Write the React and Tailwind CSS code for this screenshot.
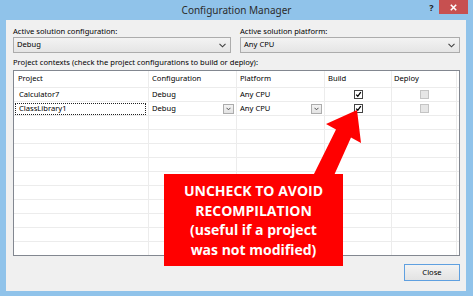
import React from "react";

const Chevron = () => (
  <svg width="7" height="5" viewBox="0 0 7 5" className="shrink-0">
    <polyline points="0.5,0.8 3.5,3.8 6.5,0.8" fill="none" stroke="#404040" strokeWidth="1.1" />
  </svg>
);

const Combo = ({ text }) => (
  <div className="h-[16px] border border-[#acacac] bg-linear-to-b from-[#f3f3f3] to-[#e5e5e5] flex items-center pl-[3px] pr-[4px] text-[7.6px] text-black">
    <span className="flex-1 leading-none">{text}</span>
    <Chevron />
  </div>
);

const DropBtn = () => (
  <div className="w-[11px] h-[10px] border border-[#acacac] bg-linear-to-b from-[#f3f3f3] to-[#e3e3e3] flex items-center justify-center">
    <svg width="5" height="4" viewBox="0 0 5 4">
      <polyline points="0.5,0.8 2.5,2.8 4.5,0.8" fill="none" stroke="#505050" strokeWidth="1" />
    </svg>
  </div>
);

const Check = ({ checked, disabled }) => (
  <div
    className={
      disabled
        ? "w-[9px] h-[9px] border border-[#c4c4c4] bg-[#e6e6e6]"
        : "w-[9px] h-[9px] border border-[#444444] bg-white flex items-center justify-center"
    }
  >
    {checked && (
      <svg width="7" height="7" viewBox="0 0 7 7">
        <polyline points="1.2,3.6 2.8,5.3 5.8,1.2" fill="none" stroke="#000" strokeWidth="1.3" />
      </svg>
    )}
  </div>
);

const cols = "grid grid-cols-[135px_88px_88px_67px_65px_1fr]";
const cell = "border-r border-[#ececec] flex items-center h-full";

export default function App() {
  const emptyRows = Array.from({ length: 10 });
  return (
    <div className="relative w-[473px] h-[296px] bg-[#90c3ea] flex flex-col overflow-hidden font-['Noto_Sans',sans-serif] text-black">
      {/* Title bar */}
      <div className="h-[20px] flex items-start shrink-0">
        <div className="w-[53px]" />
        <div className="flex-1 text-center text-[10px] leading-[20px] text-[#2b2b2b]">Configuration Manager</div>
        <div className="w-[53px] flex items-start">
          <div className="w-[19px] pl-[4px] text-center text-[9px] font-bold leading-[16px] text-[#222]">?</div>
          <div className="w-[29px] h-[14px] bg-[#c75050] flex items-center justify-center">
            <svg width="7" height="7" viewBox="0 0 7 7">
              <path d="M0.8,0.8 L6.2,6.2 M6.2,0.8 L0.8,6.2" stroke="#fff" strokeWidth="1.6" />
            </svg>
          </div>
        </div>
      </div>

      {/* Content */}
      <div className="ml-[6px] mr-[7px] h-[271px] bg-[#f0f0f0] pl-[7px] pr-[6px] pt-[6px] flex flex-col text-[7.6px]">
        <div className="flex gap-[9px]">
          <div className="w-[218px] flex flex-col">
            <div className="h-[11px] leading-[11px]">Active solution configuration:</div>
            <Combo text="Debug" />
          </div>
          <div className="flex-1 flex flex-col">
            <div className="h-[11px] leading-[11px]">Active solution platform:</div>
            <Combo text="Any CPU" />
          </div>
        </div>

        <div className="mt-[4px] h-[11px] leading-[11px]">
          Project contexts (check the project configurations to build or deploy):
        </div>

        <div className="mt-[2px] h-[186px] border border-[#828790] bg-white overflow-hidden flex flex-col">
          <div className={`${cols} h-[17px] border-b border-[#ececec] shrink-0`}>
            <div className={`${cell} pl-[4px]`}>Project</div>
            <div className={`${cell} pl-[3px]`}>Configuration</div>
            <div className={`${cell} pl-[3px]`}>Platform</div>
            <div className={`${cell} pl-[3px]`}>Build</div>
            <div className={`${cell} pl-[2px]`}>Deploy</div>
            <div className="h-full" />
          </div>

          <div className={`${cols} h-[14px] border-b border-[#ececec] shrink-0`}>
            <div className={`${cell} pl-[5px]`}>Calculator7</div>
            <div className={`${cell} pl-[3px]`}>Debug</div>
            <div className={`${cell} pl-[3px]`}>Any CPU</div>
            <div className={`${cell} justify-center`}><Check checked /></div>
            <div className={`${cell} justify-center`}><Check disabled /></div>
            <div className="h-full" />
          </div>

          <div className={`${cols} h-[14px] border-b border-[#ececec] shrink-0`}>
            <div className={`${cell} pl-[1px] pr-[2px]`}>
              <div className="flex-1 h-[12px] border border-dotted border-[#222] flex items-center pl-[3px]">ClassLibrary1</div>
            </div>
            <div className={`${cell} pl-[3px] pr-[2px]`}>
              <span className="flex-1">Debug</span>
              <DropBtn />
            </div>
            <div className={`${cell} pl-[3px] pr-[2px]`}>
              <span className="flex-1">Any CPU</span>
              <DropBtn />
            </div>
            <div className={`${cell} justify-center`}><Check checked /></div>
            <div className={`${cell} justify-center`}><Check disabled /></div>
            <div className="h-full" />
          </div>

          {emptyRows.map((_, i) => (
            <div key={i} className={`${cols} h-[14px] border-b border-[#ececec] shrink-0`}>
              <div className={cell} />
              <div className={cell} />
              <div className={cell} />
              <div className={cell} />
              <div className={cell} />
              <div className="h-full" />
            </div>
          ))}
        </div>

        <div className="mt-[8px] flex justify-end">
          <div className="w-[56px] h-[17px] border border-[#5fa0e0] bg-linear-to-b from-[#f3f3f3] to-[#e3e3e3] flex items-center justify-center">
            Close
          </div>
        </div>
      </div>

      {/* Red arrow overlay */}
      <svg className="absolute left-0 top-0" width="473" height="296" viewBox="0 0 473 296">
        <polygon
          points="357,110 326,124 336,129.5 310,182 327,191 351,137.5 361,143"
          fill="#ff0000"
        />
      </svg>

      {/* Callout */}
      <div className="absolute left-[164px] top-[174px] w-[179px] h-[92px] bg-[#ff0000] flex flex-col items-center justify-center text-white font-['Open_Sans',sans-serif] font-bold text-[14px] leading-[19.5px]">
        <div>UNCHECK TO AVOID</div>
        <div>RECOMPILATION</div>
        <div>(useful if a project</div>
        <div>was not modified)</div>
      </div>
    </div>
  );
}
